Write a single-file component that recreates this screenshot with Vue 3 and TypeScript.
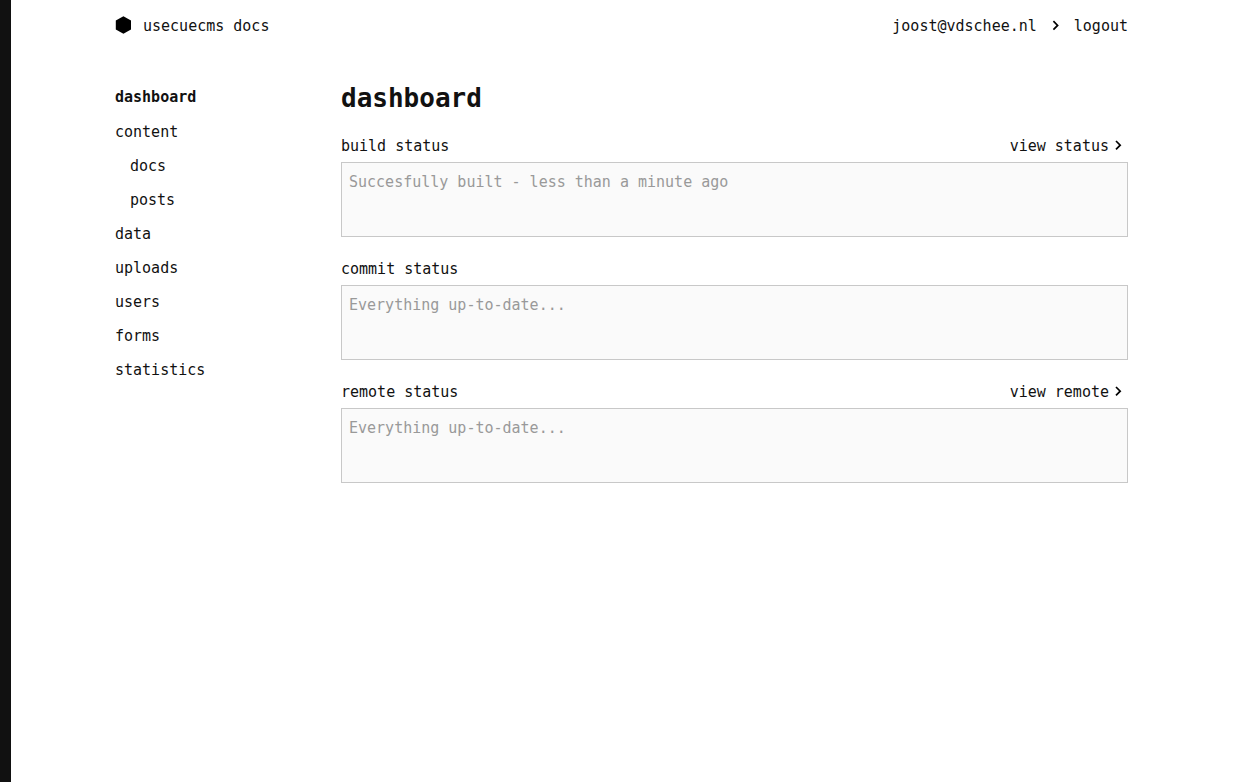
<script setup lang="ts">
interface NavItem {
  label: string
  active?: boolean
  nested?: boolean
}
interface Panel {
  id: string
  label: string
  message: string
  link?: string
}

const nav: NavItem[] = [
  { label: 'dashboard', active: true },
  { label: 'content' },
  { label: 'docs', nested: true },
  { label: 'posts', nested: true },
  { label: 'data' },
  { label: 'uploads' },
  { label: 'users' },
  { label: 'forms' },
  { label: 'statistics' },
]

const panels: Panel[] = [
  { id: 'build', label: 'build status', message: 'Succesfully built - less than a minute ago', link: 'view status' },
  { id: 'commit', label: 'commit status', message: 'Everything up-to-date...' },
  { id: 'remote', label: 'remote status', message: 'Everything up-to-date...', link: 'view remote' },
]
</script>

<template>
  <div class="page">
    <header class="top">
      <a class="brand" href="#">
        <svg class="logo" viewBox="0 0 16 20" aria-hidden="true"><path d="M8.4 .2L16 4.5v9L8.4 17.8 .8 13.5v-9z" /></svg>
        <span>usecuecms docs</span>
      </a>
      <div class="account">
        <a href="#">joost@vdschee.nl</a>
        <svg class="chevron" viewBox="0 0 9 12" aria-hidden="true"><path d="M2.4 1.2L6.6 5.4 2.4 9.6" /></svg>
        <a href="#">logout</a>
      </div>
    </header>
    <div class="body">
      <nav class="nav">
        <a v-for="n in nav" :key="n.label" href="#" :class="{ active: n.active, nested: n.nested }">{{ n.label }}</a>
      </nav>
      <main class="main">
        <h1>dashboard</h1>
        <section v-for="p in panels" :key="p.id" class="panel">
          <div class="row">
            <label :for="p.id">{{ p.label }}</label>
            <a v-if="p.link" class="more" href="#">
              {{ p.link }}
              <svg class="chevron" viewBox="0 0 9 12" aria-hidden="true"><path d="M3 1L7.2 5.2 3 9.4" /></svg>
            </a>
          </div>
          <textarea :id="p.id" :value="p.message" disabled></textarea>
        </section>
      </main>
    </div>
  </div>
</template>

<style>
body {
  background: #fff;
}
</style>

<style scoped>
.page {
  box-sizing: border-box;
  min-height: 100vh;
  padding: 0 108px 0 104px;
  border-left: 11px solid #111;
  color: #111;
  font: 15px/20px "DejaVu Sans Mono", monospace;
}
a {
  color: inherit;
  text-decoration: none;
}
.top {
  display: flex;
  align-items: center;
  justify-content: space-between;
  height: 52px;
}
.brand,
.account {
  display: flex;
  align-items: center;
}
.brand {
  gap: 12px;
}
.logo {
  width: 16px;
  height: 20px;
  fill: #000;
}
.account {
  gap: 14px;
}
.chevron {
  width: 9px;
  height: 12px;
  fill: none;
  stroke: #000;
  stroke-width: 1.7;
}
.body {
  display: flex;
  gap: 26px;
  padding-top: 28px;
}
.nav {
  display: flex;
  flex: none;
  flex-direction: column;
  width: 200px;
}
.nav a {
  line-height: 34px;
}
.nav .active {
  margin-bottom: 1px;
  font-weight: 700;
}
.nav .nested {
  padding-left: 15px;
}
.main {
  flex: 1;
  min-width: 0;
}
h1 {
  margin: 0 0 20px;
  font-size: 26px;
  line-height: 36px;
}
.panel {
  margin-bottom: 22px;
}
.row {
  display: flex;
  justify-content: space-between;
  margin-bottom: 6px;
}
.more {
  display: flex;
  align-items: center;
  gap: 4px;
  padding-right: 6px;
}
textarea {
  display: block;
  box-sizing: border-box;
  width: 100%;
  height: 75px;
  padding: 9px 7px;
  border: 1px solid #c8c8c8;
  border-radius: 0;
  background: #fafafa;
  color: #999;
  font: inherit;
  resize: none;
}
</style>
